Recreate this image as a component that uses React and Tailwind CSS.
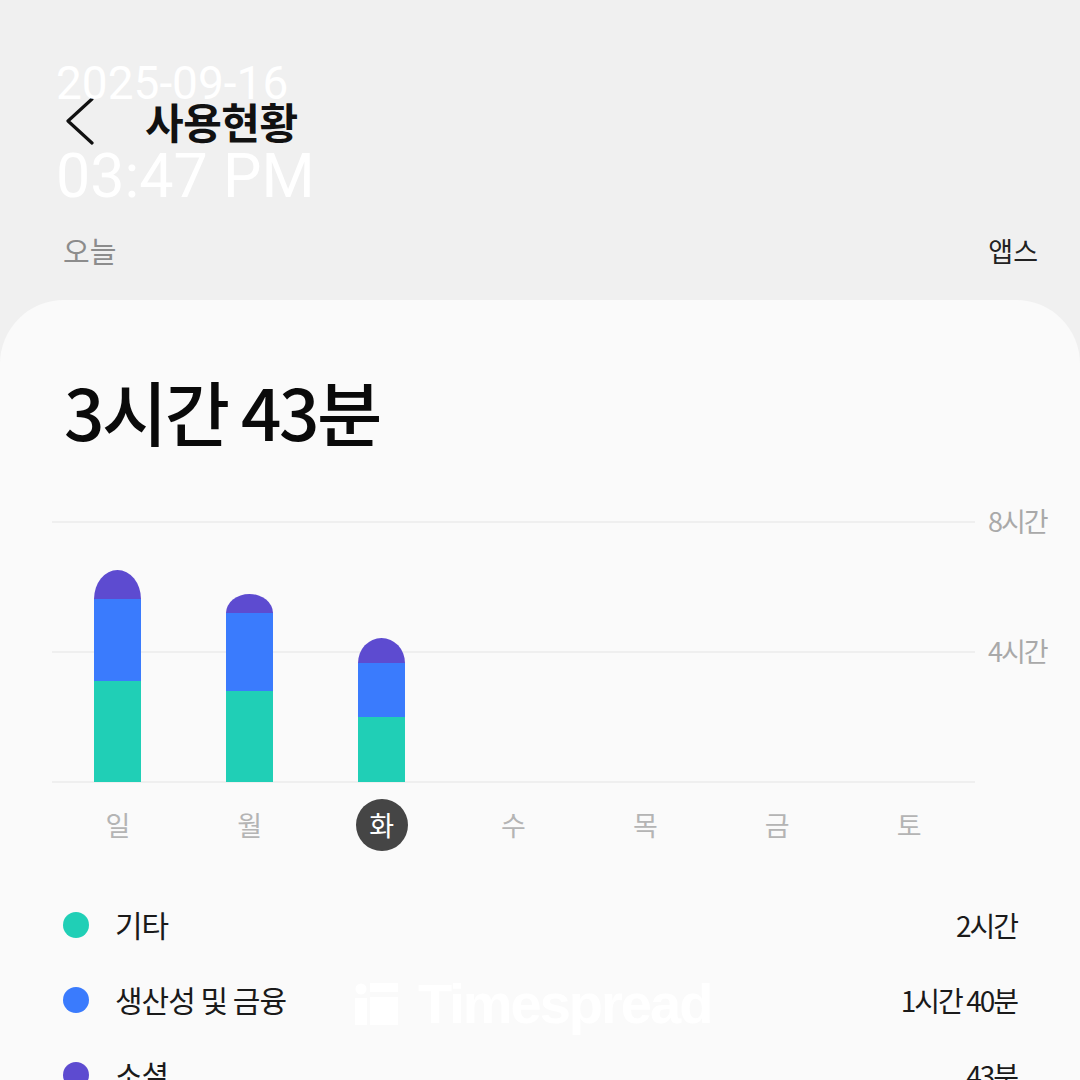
const KR = "font-['Noto_Sans_CJK_KR','Noto_Sans',sans-serif]"

const bars = [
  { teal: 101, blue: 82, purple: 29 },
  { teal: 91, blue: 78, purple: 19 },
  { teal: 65, blue: 54, purple: 25 },
  null, null, null, null,
]

const days = ['일', '월', '화', '수', '목', '금', '토']

const legend = [
  { color: 'bg-[#20cfb6]', label: '기타', value: '2시간' },
  { color: 'bg-[#3a7bfd]', label: '생산성 및 금융', value: '1시간 40분' },
  { color: 'bg-[#5d4bd0]', label: '소셜', value: '43분' },
]

function Bar({ b }) {
  if (!b) return <div />
  return (
    <div className="flex justify-center items-end h-full">
      <div className="w-[47px] flex flex-col">
        <div className="bg-[#5d4bd0] rounded-t-[50%_100%]" style={{ height: b.purple }} />
        <div className="bg-[#3a7bfd]" style={{ height: b.blue }} />
        <div className="bg-[#20cfb6]" style={{ height: b.teal }} />
      </div>
    </div>
  )
}

export default function App() {
  return (
    <div className={`relative w-[1080px] h-[1080px] overflow-hidden bg-[#f0f0f0] flex flex-col ${KR}`}>
      {/* header */}
      <div className="flex items-center h-[52px] mt-[96px] pl-[62px]">
        <svg width="32" height="50" viewBox="0 0 32 50" className="text-[#111]">
          <polyline points="30,3 6,25 30,47" fill="none" stroke="currentColor" strokeWidth="3.2" strokeLinecap="round" strokeLinejoin="round" />
        </svg>
        <span className="ml-[51px] text-[42px] font-bold text-[#111] leading-none tracking-[-0.5px]">사용현황</span>
      </div>

      <div className="flex items-center justify-between h-[40px] mt-[85px] pl-[63px] pr-[42px]">
        <span className="text-[29px] text-[#8c8c8c]">오늘</span>
        <span className="text-[27px] text-[#222]">앱스</span>
      </div>

      {/* card */}
      <div className="flex-1 mt-[29px] bg-[#fafafa] rounded-t-[64px] flex flex-col">
        <div className="pl-[64px] mt-[72px] h-[76px] flex items-center">
          <span className="text-[71px] font-medium leading-none text-[#0a0a0a] tracking-[-2.5px]">3시간 43분</span>
        </div>

        <div className="flex mt-[73px] pl-[52px]">
          <div className="relative w-[923px] h-[262px]">
            <div className="flex flex-col h-full">
              <div className="h-[130px] border-t-2 border-[#efefef]" />
              <div className="h-[132px] border-t-2 border-b-2 border-[#efefef]" />
            </div>
            <div className="absolute inset-0 grid grid-cols-7 items-end pb-[1px]">
              {bars.map((b, i) => <Bar key={i} b={b} />)}
            </div>
          </div>
          <div className="flex flex-col ml-[13px] -mt-[18px]">
            <span className="text-[27px] text-[#a9a9a9] leading-[36px] tracking-[-2px]">8시간</span>
            <span className="text-[27px] text-[#a9a9a9] leading-[36px] tracking-[-2px] mt-[94px]">4시간</span>
          </div>
        </div>

        <div className="grid grid-cols-7 w-[923px] ml-[52px] mt-[16px] h-[52px]">
          {days.map((d, i) => (
            <div key={d} className="flex justify-center items-center">
              {i === 2 ? (
                <span className="w-[52px] h-[52px] rounded-full bg-[#454545] text-white text-[27px] flex items-center justify-center">{d}</span>
              ) : (
                <span className="text-[27px] text-[#b4b4b4]">{d}</span>
              )}
            </div>
          ))}
        </div>

        <div className="flex flex-col mt-[36px] pl-[63px] pr-[63px]">
          {legend.map((l) => (
            <div key={l.label} className="flex items-center h-[75px]">
              <span className={`w-[26px] h-[26px] rounded-full ${l.color}`} />
              <span className="ml-[26px] text-[30px] text-[#1a1a1a] tracking-[-1px]">{l.label}</span>
              <span className="ml-auto text-[28px] text-[#1a1a1a] tracking-[-2px]">{l.value}</span>
            </div>
          ))}
        </div>
      </div>

      {/* date/time overlay */}
      <div className="absolute left-[56px] top-[60px] flex flex-col font-['Roboto',sans-serif] text-white leading-none">
        <span className="text-[46px]">2025-09-16</span>
        <span className="text-[61px] mt-[40px]">03:47 PM</span>
      </div>

      {/* watermark */}
      <div className="absolute left-[355px] top-[976px] flex items-center gap-[20px] text-white">
        <svg width="43" height="42" viewBox="0 0 43 42" fill="white">
          <circle cx="6" cy="6" r="5.5" />
          <rect x="0" y="15" width="12" height="27" />
          <rect x="15" y="0" width="28" height="9" />
          <rect x="15" y="14" width="28" height="28" />
        </svg>
        <span className="font-['Liberation_Sans',sans-serif] font-bold text-[56px] leading-none tracking-[-2px]">Timespread</span>
      </div>
    </div>
  )
}
